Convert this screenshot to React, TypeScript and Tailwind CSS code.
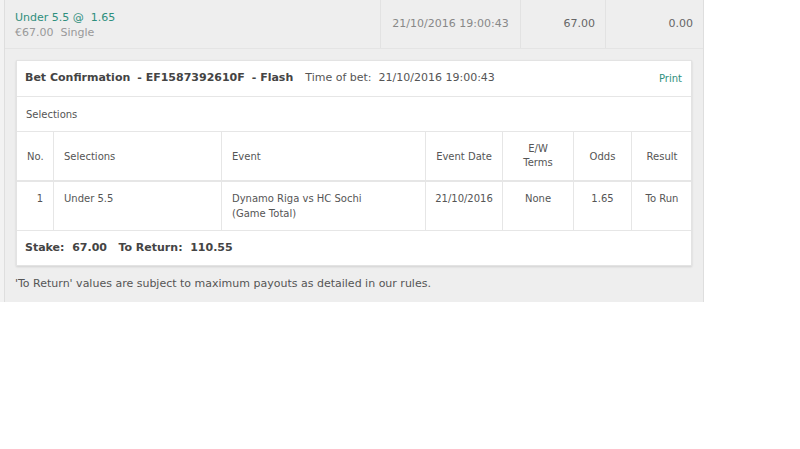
import React from "react";

const font = { fontFamily: '"DejaVu Sans", Verdana, sans-serif' };

export default function App() {
  const cols = "grid grid-cols-[37px_168px_204px_77px_71px_58px_60px]";
  return (
    <div className="w-[800px] h-[449px] bg-white text-[11px]" style={font}>
      <div className="flex w-[704px] bg-[#efefef]">
        <div className="w-[4px] bg-[#f2f2f2]" />
        <div className="w-[700px] bg-[#eeeeee] border-l border-r border-[#dedede] pb-[10px]">
          {/* top summary row */}
          <div className="flex h-[49px] border-b border-[#e4e4e4]">
            <div className="w-[376px] border-r border-[#e2e2e2] pl-[10px] pt-[10px] leading-[15px]">
              <div className="text-[#2e8f7d]">Under 5.5 @&nbsp;&nbsp;1.65</div>
              <div className="text-[#999]">€67.00&nbsp;&nbsp;Single</div>
            </div>
            <div className="w-[140px] border-r border-[#e2e2e2] flex items-center justify-center text-[#888]">
              21/10/2016 19:00:43
            </div>
            <div className="w-[85px] border-r border-[#e2e2e2] flex items-center justify-end pr-[10px] text-[#666]">
              67.00
            </div>
            <div className="flex-1 flex items-center justify-end pr-[10px] text-[#666]">0.00</div>
          </div>

          {/* card */}
          <div className="ml-[11px] mt-[11px] w-[676px] bg-white border border-[#e3e3e3] shadow-[0_1px_2px_rgba(0,0,0,0.12)]">
            <div className="flex items-center h-[36px] border-b border-[#e6e6e6] pl-[8px] pr-[9px]">
              <span className="font-bold text-[#444]">Bet Confirmation</span>
              <span className="font-bold text-[#444] ml-[7px]">- EF1587392610F</span>
              <span className="font-bold text-[#444] ml-[7px]">- Flash</span>
              <span className="text-[#555] ml-[12px]">Time of bet:&nbsp;&nbsp;21/10/2016 19:00:43</span>
              <span className="ml-auto text-[#2e8f7d] text-[10px]">Print</span>
            </div>
            <div className="flex items-center h-[35px] border-b border-[#e6e6e6] pl-[9px] text-[#555] text-[10px]">
              Selections
            </div>
            <div className={`${cols} h-[50px] border-b-2 border-[#e6e6e6] text-[#555] text-[10px]`}>
              <div className="flex items-center pl-[10px] border-r border-[#e6e6e6]">No.</div>
              <div className="flex items-center pl-[10px] border-r border-[#e6e6e6]">Selections</div>
              <div className="flex items-center pl-[10px] border-r border-[#e6e6e6]">Event</div>
              <div className="flex items-center justify-center border-r border-[#e6e6e6]">Event Date</div>
              <div className="flex items-center justify-center text-center leading-[14px] border-r border-[#e6e6e6]">
                E/W
                <br />
                Terms
              </div>
              <div className="flex items-center justify-center border-r border-[#e6e6e6]">Odds</div>
              <div className="flex items-center justify-center">Result</div>
            </div>
            <div className={`${cols} h-[49px] border-b border-[#e6e6e6] text-[#555] text-[10px] leading-[15px]`}>
              <div className="text-right pr-[10px] pt-[9px] border-r border-[#e6e6e6]">1</div>
              <div className="pl-[10px] pt-[9px] border-r border-[#e6e6e6]">Under 5.5</div>
              <div className="pl-[10px] pt-[9px] border-r border-[#e6e6e6]">
                Dynamo Riga vs HC Sochi
                <br />
                (Game Total)
              </div>
              <div className="text-center pt-[9px] border-r border-[#e6e6e6]">21/10/2016</div>
              <div className="text-center pt-[9px] border-r border-[#e6e6e6]">None</div>
              <div className="text-center pt-[9px] border-r border-[#e6e6e6]">1.65</div>
              <div className="text-center pt-[9px]">To Run</div>
            </div>
            <div className="flex items-center h-[34px] pl-[8px] font-bold text-[#444]">
              Stake:&nbsp;&nbsp;67.00&nbsp;&nbsp;&nbsp;To Return:&nbsp;&nbsp;110.55
            </div>
          </div>

          <div className="mt-[10px] pl-[10px] text-[#555] leading-[16px]">
            'To Return' values are subject to maximum payouts as detailed in our rules.
          </div>
        </div>
      </div>
    </div>
  );
}
